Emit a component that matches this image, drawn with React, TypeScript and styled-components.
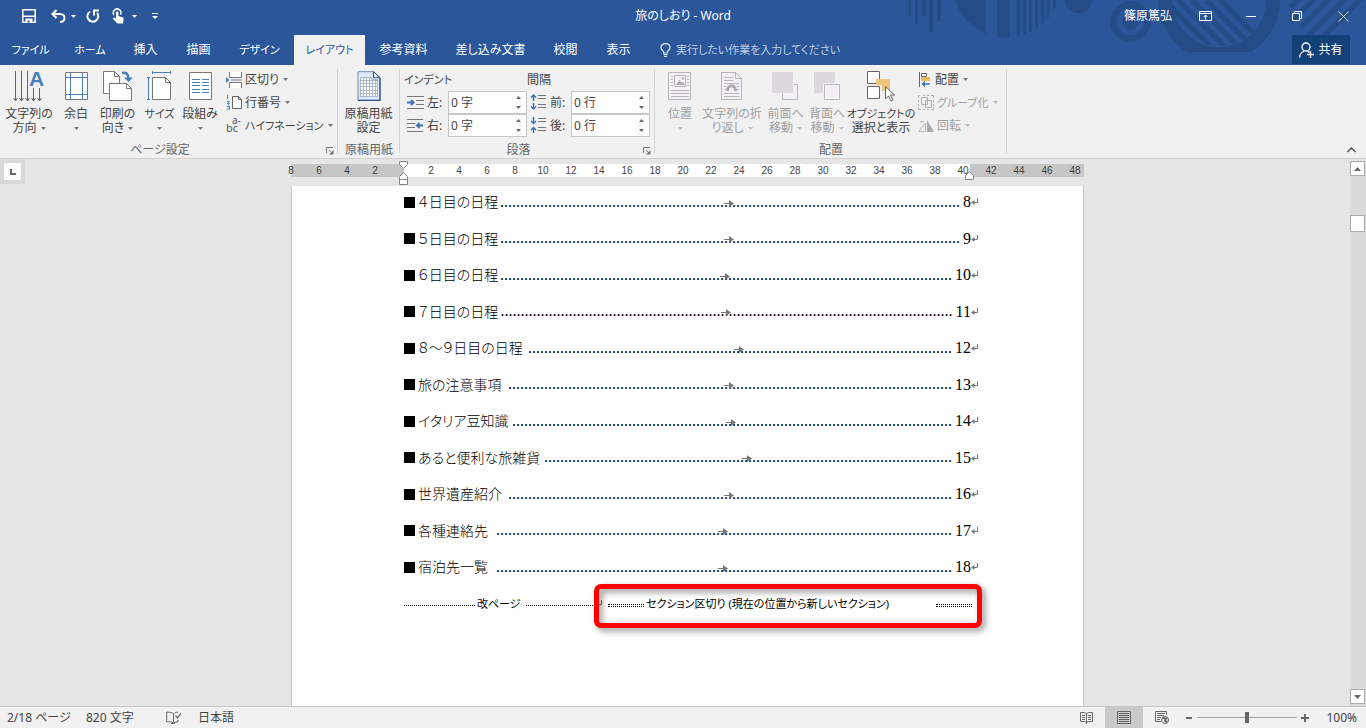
import React from "react";
import styled, { createGlobalStyle, css } from "styled-components";

const GlobalStyle = createGlobalStyle`
  *, *::before, *::after { box-sizing: border-box; }
  body {
    margin: 0;
    background: #e6e6e6;
    color: #444;
    font: 12px/14px "Noto Sans", "Noto Sans CJK JP", sans-serif;
    font-feature-settings: "palt";
  }
  button, input {
    font: inherit;
    font-feature-settings: inherit;
    color: inherit;
    border: 0;
    padding: 0;
    margin: 0;
    background: none;
    border-radius: 0;
  }
  svg { display: block; flex: none; }
`;

const Shell = styled.div`
  display: flex;
  flex-direction: column;
  min-height: 100vh;
`;

/* ---------- header ---------- */

const Header = styled.header`
  position: relative;
  height: 65px;
  background: #2b579a;
  color: #fff;
  overflow: hidden;
`;

const Pattern = styled.svg`
  position: absolute;
  top: 0;
  right: 0;
`;

const TitleBar = styled.div`
  position: relative;
  display: grid;
  grid-template-columns: 1fr auto 1fr;
  align-items: center;
  height: 32px;
`;

const QuickAccess = styled.div`
  display: flex;
  align-items: center;
  padding-left: 12px;
`;

const QuickButton = styled.button<{ $w: number }>`
  display: flex;
  align-items: center;
  justify-content: center;
  width: ${(p) => p.$w}px;
  height: 24px;
`;

const WindowControls = styled.div`
  display: flex;
  justify-content: flex-end;
  align-items: center;
`;

const WindowButton = styled.button`
  display: flex;
  align-items: center;
  justify-content: center;
  width: 46px;
  height: 32px;
`;

const UserButton = styled.button`
  width: 68px;
  height: 32px;
`;

const TabBar = styled.nav`
  position: relative;
  display: flex;
  margin-top: 3px;
  height: 30px;
`;

const Tab = styled.button<{ $w: number; $active?: boolean; $dense?: boolean }>`
  flex: none;
  width: ${(p) => p.$w}px;
  font-size: ${(p) => (p.$dense ? 11 : 12)}px;
  white-space: nowrap;
  ${(p) =>
    p.$active &&
    css`
      background: #f1f1f1;
      color: #2b579a;
    `}
`;

const TellMe = styled.label`
  display: flex;
  align-items: center;
  gap: 5px;
  margin-left: 15px;
  flex: 1;
`;

const TellMeInput = styled.input`
  width: 200px;
  font-size: 11px;
  outline: 0;
  &::placeholder { color: #bfcde2; opacity: 1; }
`;

const Share = styled.button`
  display: flex;
  align-items: center;
  justify-content: center;
  gap: 4px;
  width: 58px;
  height: 29px;
  margin-right: 16px;
  background: #124078;
`;

/* ---------- ribbon ---------- */

const Ribbon = styled.section`
  display: flex;
  height: 94px;
  background: #f1f1f1;
  border-bottom: 1px solid #d2d2d2;
`;

const Group = styled.div<{ $w: number }>`
  position: relative;
  flex: none;
  display: flex;
  flex-direction: column;
  width: ${(p) => p.$w}px;
  padding-top: 3px;
  background: linear-gradient(#d4d4d4, #d4d4d4) right 4px / 1px 84px no-repeat;
`;

const GroupBody = styled.div<{ $left?: number }>`
  display: flex;
  height: 73px;
  padding-left: ${(p) => p.$left ?? 0}px;
`;

const GroupLabel = styled.div`
  height: 17px;
  line-height: 18px;
  padding-right: 18px;
  text-align: center;
  color: #666;
`;

const NarrowLabel = styled(GroupLabel)`
  padding-right: 0;
`;

const Launcher = styled.button`
  position: absolute;
  right: 4px;
  bottom: 3px;
`;

const BigButton = styled.button<{ $w: number; $disabled?: boolean }>`
  display: flex;
  flex-direction: column;
  align-items: center;
  flex: none;
  width: ${(p) => p.$w}px;
  padding-top: 3px;
  white-space: nowrap;
  color: ${(p) => (p.$disabled ? "#a0a0a0" : "#444")};
`;

const BigIcon = styled.span`
  display: flex;
  justify-content: center;
  height: 32px;
  margin-bottom: 4px;
`;

const Line = styled.span<{ $dense?: boolean }>`
  display: flex;
  align-items: center;
  justify-content: center;
  gap: 4px;
  height: 14px;
  font-size: ${(p) => (p.$dense ? 11 : 12)}px;
`;

const SmallColumn = styled.div`
  display: flex;
  flex-direction: column;
  padding-left: 4px;
`;

const SmallButton = styled.button<{ $disabled?: boolean }>`
  display: flex;
  align-items: center;
  gap: 3px;
  height: 23px;
  white-space: nowrap;
  color: ${(p) => (p.$disabled ? "#a0a0a0" : "#444")};
`;

const SmallText = styled.span<{ $dense?: boolean }>`
  margin-right: 1px;
  font-size: ${(p) => (p.$dense ? 11 : 12)}px;
`;

const FieldColumn = styled.div<{ $w: number }>`
  flex: none;
  width: ${(p) => p.$w}px;
`;

const FieldHeading = styled.div<{ $dense?: boolean }>`
  height: 23px;
  line-height: 24px;
  font-size: ${(p) => (p.$dense ? 11 : 12)}px;
`;

const FieldRow = styled.div`
  display: flex;
  align-items: center;
  height: 23px;
  padding-left: 3px;
`;

const FieldLabel = styled.label`
  flex: none;
  width: 21px;
  margin-left: 3px;
`;

const Spin = styled.div`
  display: flex;
  width: 79px;
  height: 23px;
  background: #fff;
  border: 1px solid #c6c6c6;
`;

const SpinInput = styled.input`
  flex: 1;
  min-width: 0;
  padding-left: 2px;
  outline: 0;
`;

const SpinButtons = styled.div`
  display: flex;
  flex-direction: column;
  width: 15px;
`;

const SpinButton = styled.button`
  display: flex;
  flex: 1;
  align-items: center;
  justify-content: center;
`;

const Collapse = styled.button`
  margin: auto 10px 5px auto;
`;

/* ---------- document ---------- */

const Workspace = styled.main`
  flex: 1;
  display: flex;
`;

const Gutter = styled.div`
  flex: none;
  width: 25px;
`;

const TabSelector = styled.button`
  display: flex;
  align-items: center;
  justify-content: center;
  width: 25px;
  height: 25px;
  background: #fbfbfb;
  border: 4px solid #d8d8d8;
`;

const Canvas = styled.div`
  flex: 1;
  display: flex;
  flex-direction: column;
  align-items: center;
  padding-top: 5px;
`;

const Ruler = styled.div`
  position: relative;
  width: 793px;
  height: 13px;
  margin-bottom: 9px;
  background: linear-gradient(90deg, #c6c6c6 113px, #fff 113px 679px, #c6c6c6 679px);
`;

const RulerNumbers = styled.div`
  display: flex;
  margin-left: -14px;
  font: 10px/13px "Liberation Sans", sans-serif;
`;

const RulerNumber = styled.span`
  flex: none;
  width: 28px;
  text-align: center;
`;

const LeftMarker = styled.svg`
  position: absolute;
  left: 108px;
  top: -4px;
`;

const RightMarker = styled.svg`
  position: absolute;
  left: 674px;
  top: 6px;
`;

const Paper = styled.article`
  flex: 1;
  width: 793px;
  padding: 6px 105px 20px 112px;
  background: #fff;
  border: solid #c6c6c6;
  border-width: 0 1px;
`;

const Contents = styled.ol`
  display: flex;
  flex-direction: column;
  justify-content: space-between;
  height: 422px;
  margin: 0;
  padding: 0;
  list-style: none;
  color: #000;
`;

const Entry = styled.li`
  display: flex;
  align-items: center;
  height: 20px;
  line-height: 20px;
  white-space: nowrap;
`;

const Square = styled.span`
  width: 11px;
  height: 11px;
  margin-right: 3px;
  background: #000;
`;

const EntryTitle = styled.span`
  flex: none;
  padding-bottom: 2px;
  font-family: "Noto Sans CJK JP", sans-serif;
  font-weight: 300;
  font-size: 14px;
`;

const Leader = styled.span`
  position: relative;
  margin-left: auto;
`;

const Dots = styled.span`
  font: 16px/20px "Liberation Serif", serif;
`;

const TabMark = styled.svg`
  position: absolute;
  left: calc(50% - 6px);
  top: 8px;
`;

const PageNumber = styled.span`
  padding-left: 3px;
  font: 16px/20px "Liberation Serif", serif;
`;

const BreakRow = styled(Entry)`
  position: relative;
  font-size: 11px;
`;

const DottedLine = styled.span<{ $w: number; $double?: boolean }>`
  flex: none;
  width: ${(p) => p.$w}px;
  height: ${(p) => (p.$double ? 3 : 1)}px;
  margin-top: 3px;
  border-top: 1px dotted #000;
  border-bottom: ${(p) => (p.$double ? "1px dotted #000" : "0")};
`;

const BreakText = styled.span<{ $w: number }>`
  flex: none;
  width: ${(p) => p.$w}px;
  padding-left: 2px;
`;

const Highlight = styled.div`
  position: absolute;
  left: 190px;
  right: -4px;
  top: -10px;
  height: 44px;
  border: 5px solid #f00;
  border-radius: 7px;
  filter: drop-shadow(3px 3px 3px rgba(0, 0, 0, 0.45));
`;

const ScrollBar = styled.div`
  flex: none;
  display: flex;
  flex-direction: column;
  width: 16px;
  padding: 2px 1px 2px 0;
  background: linear-gradient(#dadada, #dadada) 0 2px no-repeat;
`;

const ScrollButton = styled.button`
  display: flex;
  align-items: center;
  justify-content: center;
  height: 15px;
  background: #fff;
  border: 1px solid #ababab;
`;

const ScrollTrack = styled.div`
  flex: 1;
  padding-top: 39px;
`;

const ScrollThumb = styled.div`
  height: 17px;
  background: #fff;
  border: 1px solid #ababab;
`;

/* ---------- status bar ---------- */

const StatusBar = styled.footer`
  display: flex;
  align-items: center;
  height: 22px;
  padding: 0 9px 0 7px;
  background: #f1f1f1;
  border-top: 1px solid #c6c6c6;
`;

const StatusText = styled.button<{ $w: number }>`
  width: ${(p) => p.$w}px;
  text-align: left;
  white-space: nowrap;
`;

const Spacer = styled.div`
  flex: 1;
`;

const ViewButton = styled.button<{ $active?: boolean }>`
  display: flex;
  align-items: center;
  justify-content: center;
  width: 38px;
  height: 21px;
  background: ${(p) => (p.$active ? "#cacaca" : "none")};
`;

const ZoomButton = styled.button`
  display: flex;
  align-items: center;
  justify-content: center;
  width: 16px;
  height: 21px;
`;

const ZoomSlider = styled.input`
  appearance: none;
  width: 100px;
  height: 11px;
  margin: 0;
  background: linear-gradient(#a6a6a6, #a6a6a6) 0 5px / 100% 1px no-repeat;
  &::-webkit-slider-thumb {
    appearance: none;
    width: 4px;
    height: 11px;
    background: #666;
  }
`;

const ZoomValue = styled.button`
  width: 44px;
  text-align: right;
`;

/* ---------- small drawings ---------- */

const Caret = ({ color = "#777" }: { color?: string }) => (
  <svg width="5" height="3" viewBox="0 0 5 3">
    <path d="M0 0h5L2.5 3z" fill={color} />
  </svg>
);

const CaretUp = () => (
  <svg width="5" height="3" viewBox="0 0 5 3">
    <path d="M0 3h5L2.5 0z" fill="#666" />
  </svg>
);

const ScrollArrow = ({ up }: { up?: boolean }) => (
  <svg width="7" height="4" viewBox="0 0 7 4">
    <path d={up ? "M0 4h7L3.500 0z" : "M0 0h7L3.500 4z"} fill="#666" />
  </svg>
);

const LauncherIcon = () => (
  <svg width="8" height="8" viewBox="0 0 8 8" fill="none" stroke="#777">
    <path d="M.5 6V.5H7M3 3l3 3" />
    <path d="M7.5 3v4.500H3z" fill="#777" stroke="none" />
  </svg>
);

const HeaderPattern = () => (
  <Pattern width="466" height="65" viewBox="900 0 466 65" fill="#244c86">
    <path d="M908 0h3v16h-3zM915 0h3v24h-3zM922 0h4v16h-4zM929 0h4v32h-4zM937 0h4v21h-4z" />
    <defs>
      <clipPath id="disc">
        <circle cx="1006.500" cy="-16.500" r="54" />
      </clipPath>
      <clipPath id="lens">
        <circle cx="1219" cy="-2" r="48" />
      </clipPath>
      <clipPath id="ringCut">
        <path d="M1140 0h160v52h-160z" />
      </clipPath>
    </defs>
    <g clipPath="url(#disc)">
      <path d="M950 0h36v40h-36zM997 0h13v40h-13zM1017 0h3v40h-3zM1023 0h3v40h-3zM1029 0h3v40h-3zM1035 0h3v40h-3zM1041 0h3v40h-3zM1047 0h3v40h-3zM1053 0h3v40h-3z" />
    </g>
    <circle cx="1078.500" cy="-1" r="14" />
    <circle cx="1130.500" cy="21.500" r="17" fill="none" stroke="#244c86" strokeWidth="6.500" />
    <circle cx="1130.500" cy="21.500" r="8" />
    <g clipPath="url(#ringCut)">
      <circle cx="1219" cy="0" r="54" fill="none" stroke="#244c86" strokeWidth="14" />
    </g>
    <g clipPath="url(#lens)" stroke="#244c86" strokeWidth="5">
      <path d="M1164 0l60 60M1178 0l60 60M1192 0l60 60M1206 0l60 60M1220 0l60 60" />
    </g>
    <g stroke="#244c86" strokeWidth="5">
      <path d="M1291 7l8-8M1291 22l24-24M1301 27l29-29M1303 41l44-44M1320 40l44-44" />
    </g>
  </Pattern>
);

const SaveIcon = () => (
  <svg width="14" height="14" viewBox="0 0 14 14" fill="none" stroke="#fff" strokeWidth="1.500">
    <path d="M.8.800h12.400v12.400H.800z" />
    <path d="M1 6.500h12v1.500H1zM3.500 9.500h7v4h-7z" fill="#fff" stroke="none" />
    <path d="M5.500 11.500h2v2h-2z" fill="#2b579a" stroke="none" />
  </svg>
);

const UndoIcon = () => (
  <svg width="15" height="14" viewBox="0 0 15 14" fill="none" stroke="#fff" strokeWidth="2">
    <path d="M5.500 1L1.500 5l4 4M2 5h7c6 0 6 8 0 8" />
  </svg>
);

const RedoIcon = () => (
  <svg width="14" height="14" viewBox="0 0 14 14" fill="none" stroke="#fff" strokeWidth="2">
    <path d="M4.200 2.500A5.400 5.400 0 1 0 11 3.800M8 6.500V1.500h5" />
  </svg>
);

const TouchIcon = () => (
  <svg width="13" height="16" viewBox="0 0 13 16" fill="none" stroke="#fff">
    <path d="M2 7A3.800 3.800 0 1 1 8.500 6.500" strokeWidth="1.500" />
    <path d="M4 4.500c0-1.500 2.400-1.500 2.400 0V8l4 1.200c1 .3 1.300 1 1.200 2L11 15.500H5.500L1 11c0-1.500 1.500-1.500 3-.500z" fill="#fff" stroke="none" />
  </svg>
);

const CustomizeIcon = () => (
  <svg width="6" height="7" viewBox="0 0 6 7" fill="#fff">
    <path d="M0 0h6v1H0zM0 3h6L3 6z" />
  </svg>
);

const RibbonDisplayIcon = () => (
  <svg width="13" height="10" viewBox="0 0 13 10" fill="none" stroke="#fff">
    <path d="M.5.500h12v9H.500zM.500 2.500h12M6.500 8.500V4.500M4.500 6l2-2 2 2" />
  </svg>
);

const MinimizeIcon = () => (
  <svg width="10" height="1" viewBox="0 0 10 1">
    <path d="M0 0h10v1H0z" fill="#fff" />
  </svg>
);

const RestoreIcon = () => (
  <svg width="10" height="10" viewBox="0 0 10 10" fill="none" stroke="#fff">
    <path d="M.5 2.500h7v7h-7zM2.500 2.500v-2h7v7h-2" />
  </svg>
);

const CloseIcon = () => (
  <svg width="11" height="11" viewBox="0 0 11 11" fill="none" stroke="#fff">
    <path d="M.5.500l10 10M10.500.500l-10 10" />
  </svg>
);

const BulbIcon = () => (
  <svg width="11" height="14" viewBox="0 0 11 14" fill="none" stroke="#dfe7f2" strokeWidth="1.200">
    <path d="M3.500 10V8.500C2.500 7.500 1 6.500 1 4.700 1 2.300 3 .700 5.500.700S10 2.300 10 4.700c0 1.800-1.500 2.800-2.500 3.800V10zM3.500 11.500h4M4 13.300h3" />
  </svg>
);

const ShareIcon = () => (
  <svg width="15" height="16" viewBox="0 0 15 16" fill="none" stroke="#fff" strokeWidth="1.300">
    <circle cx="7" cy="5" r="4" />
    <path d="M.700 15.500c0-3.500 2-5.500 4.600-6.500M8.500 9.300l2 1M11.500 9v7M8 12.500h7" />
  </svg>
);

const TextDirectionIcon = () => (
  <svg width="32" height="31" viewBox="0 0 32 31" fill="none" stroke="#666" overflow="visible">
    <path d="M2.500 0v30M8.500 0v30M14.500 0v30M20.500 17v13M26.500 17v13" />
    <path d="M.500 27l2 3 2-3M6.500 27l2 3 2-3M12.500 27l2 3 2-3M18.500 27l2 3 2-3M24.500 27l2 3 2-3" />
    <text x="16" y="15" fill="#4a7fb8" stroke="none" fontFamily="Liberation Sans" fontWeight="700" fontSize="21">A</text>
  </svg>
);

const MarginsIcon = () => (
  <svg width="23" height="30" viewBox="0 0 23 30" fill="none">
    <path d="M.5 1.500h22v27H.500z" fill="#fff" stroke="#777" />
    <path d="M5.500 2v26M17.500 2v26M1 6.500h21M1 23.500h21" stroke="#4a7fb8" />
  </svg>
);

const OrientationIcon = () => (
  <svg width="30" height="30" viewBox="0 0 30 30" fill="#fff" stroke="#777">
    <path d="M.5.500h11l5 5v17H.500z" />
    <path d="M11.500.500v5h5" fill="none" />
    <path d="M6.500 12.500h17l5 5v12h-22z" />
    <path d="M23.500 12.500v5h5" fill="none" />
    <path d="M19 2c4-1 6.500 1 6.500 6" fill="none" stroke="#4a7fb8" strokeWidth="2.500" />
    <path d="M21 6.500h9L25.500 11z" fill="#4a7fb8" stroke="none" />
  </svg>
);

const SizeIcon = () => (
  <svg width="25" height="30" viewBox="0 0 25 30" fill="none">
    <path d="M5.500 6.500h13l5 5v17h-18z" fill="#fff" stroke="#777" />
    <path d="M18.500 6.500v5h5" stroke="#777" />
    <path d="M5.500 1.500h18M5.500 0v3M23.500 0v3M1.500 6v22M0 6.500h3M0 28.500h3" stroke="#4a7fb8" />
  </svg>
);

const ColumnsIcon = () => (
  <svg width="23" height="30" viewBox="0 0 23 30" fill="none">
    <path d="M.5 1.500h22v27H.500z" fill="#fff" stroke="#777" />
    <path d="M3 8.500h8M3 11.500h8M3 14.500h8M3 18.500h8M3 21.500h8M13 8.500h7M13 11.500h7M13 14.500h7M13 18.500h7M13 21.500h7" stroke="#4a7fb8" />
  </svg>
);

const BreaksIcon = () => (
  <svg width="16" height="16" viewBox="0 0 16 16" fill="none" stroke="#777">
    <path d="M3.500 0v5.500h12V0M3.500 16v-5.500h12V16" fill="#fff" />
    <path d="M5 8h11" />
    <path d="M0 5l3.500 3L0 11z" fill="#4a7fb8" stroke="none" />
  </svg>
);

const LineNumbersIcon = () => (
  <svg width="16" height="15" viewBox="0 0 16 15" fill="none" stroke="#666">
    <path d="M6.500 1.500h6l3 3v9h-9z" fill="#fff" />
    <path d="M12.500 1.500v3h3" />
    <path d="M1.500 0v4M1 6.500h2.500M1 8.500h2.500M2.500 6v4M1 11.500h2.500M1 14h2.500M3.500 11v3.500" stroke="#4a7fb8" />
  </svg>
);

const HyphenationIcon = () => (
  <svg width="16" height="16" viewBox="0 0 16 16" fill="#555" fontFamily="Noto Sans" fontSize="11" overflow="visible">
    <text x="0" y="14">bc</text>
    <text x="6" y="6" fontSize="10">a-</text>
  </svg>
);

const ManuscriptIcon = () => (
  <svg width="24" height="30" viewBox="0 0 24 30" fill="none">
    <path d="M1 .700h15.500l6.500 6v22.600H1z" fill="#dfeafa" stroke="#6d87b3" />
    <path d="M23 7v22.300H1" stroke="#34568f" strokeWidth="1.300" />
    <path d="M16.500.700v6H23z" fill="#fff" stroke="#34568f" />
    <path d="M3.500 6.500h11v2h6v17h-17zM3.500 9.500h17M3.500 12.500h17M3.500 15.500h17M3.500 19.500h17M3.500 22.500h17M6.500 6.500v19M9.500 6.500v19M12.500 6.500v19M15.500 8.500v17M18.500 8.500v17" fill="#fff" stroke="#a9b6cb" />
  </svg>
);

const IndentIcon = ({ right }: { right?: boolean }) => (
  <svg width="17" height="13" viewBox="0 0 17 13" fill="none" stroke="#777">
    {right ? (
      <path d="M0 .500h16M0 4.500h8M0 8.500h8M0 12.500h16" />
    ) : (
      <path d="M0 .500h17M9 4.500h8M9 8.500h8M0 12.500h17" />
    )}
    {right ? (
      <path d="M16 6.500h-5M12.500 4l-2.500 2.500L12.500 9" stroke="#3f74b5" strokeWidth="2" />
    ) : (
      <path d="M0 6.500h6M4 4l2.500 2.500L4 9" stroke="#3f74b5" strokeWidth="2" />
    )}
  </svg>
);

const SpacingIcon = ({ after }: { after?: boolean }) => (
  <svg width="17" height="17" viewBox="0 0 17 17" fill="none" stroke="#777">
    <path d="M8 1.500h8M8 4.500h8M8 10.500h8M8 13.500h8" />
    <path
      d={after ? "M3.500 0v6M1 4l2.500 2.500L6 4M3.500 16v-6M1 13l2.500-2.500L6 13" : "M3.500 7V1M1 3.500L3.500 1 6 3.500M3.500 9v6M1 12.500L3.500 15 6 12.500"}
      stroke="#3f74b5"
      strokeWidth="1.500"
    />
  </svg>
);

const PositionIcon = () => (
  <svg width="24" height="30" viewBox="0 0 24 30" fill="#f5f0f7" stroke="#b5b5b5">
    <path d="M.5 1.500h22v27H.500z" />
    <path d="M6.500 4.500h11v11h-11z" />
    <path d="M3 5.500h2M3 8.500h2M3 11.500h2M3 14.500h2M19 5.500h2M19 8.500h2M19 11.500h2M19 14.500h2M3 19.500h18M3 22.500h18M3 25.500h18" />
    <path d="M8 14l3.500-5 2.500 3 1-1 2 3zM14 6.500h2v2h-2z" fill="#a9a9a9" stroke="none" />
  </svg>
);

const WrapIcon = () => (
  <svg width="22" height="30" viewBox="0 0 22 30" fill="none" stroke="#b5b5b5">
    <path d="M.5 1.500h14l6 6v21H.500z" fill="#f5f0f7" />
    <path d="M14.500 1.500v6h6" />
    <path d="M3 6.500h9M3 9.500h9M3 12.500h15M3 15.500h2M16 15.500h2M3 18.500h2M16 18.500h2M3 22.500h15M3 25.500h15" />
    <path d="M6.500 20c0-7 8-7 8 0" stroke="#a9a9a9" strokeWidth="3" />
  </svg>
);

const ForwardIcon = () => (
  <svg width="27" height="30" viewBox="0 0 27 30">
    <path d="M10.500 13.500h15v15h-15z" fill="#f5f0f7" stroke="#b9b9b9" />
    <path d="M0 1h22v22H0z" fill="#f1f1f1" />
    <path d="M0 1h21v21H0z" fill="#ddd8dd" />
  </svg>
);

const BackwardIcon = () => (
  <svg width="27" height="30" viewBox="0 0 27 30">
    <path d="M0 1h21v21H0z" fill="#ddd8dd" />
    <path d="M9 12h18v18H9z" fill="#f1f1f1" />
    <path d="M10.500 13.500h15v15h-15z" fill="#f5f0f7" stroke="#b9b9b9" />
  </svg>
);

const SelectionIcon = () => (
  <svg width="28" height="31" viewBox="0 0 28 31" fill="#fff" stroke="#666">
    <path d="M.5.500h12v12H.500z" />
    <path d="M9 8h14v12H15v-6H9z" fill="#efc57c" stroke="none" />
    <path d="M.5 15.500h12v12H.500z" />
    <path d="M18.500 15.500v12.500l3-3 2.500 5 2-1-2.500-5h4z" />
  </svg>
);

const AlignIcon = () => (
  <svg width="14" height="15" viewBox="0 0 14 15" fill="none" stroke="#666">
    <path d="M1.500 0v15M3.500 1.500h5v3h-5z" />
    <path d="M3 5h9v4H3z" fill="#efb95f" stroke="none" />
    <path d="M12 12H4.500M7 9.500L4.500 12 7 14.500" stroke="#3f74b5" strokeWidth="1.500" />
  </svg>
);

const GroupIcon = () => (
  <svg width="16" height="15" viewBox="0 0 16 15" fill="none" stroke="#b0b0b0">
    <path d="M3.500 2.500h6v7h-6zM7.500 5.500h6v7h-6z" />
    <path d="M0 0h3M.500 0v3M13 .500h3M15.500 0v3M0 14.500h3M.500 12v3M13 14.500h3M15.500 12v3M5 .500h2M9 .500h2M5 14.500h2M9 14.500h2M.500 5v2M.500 9v2M15.500 5v2M15.500 9v2" />
  </svg>
);

const RotateIcon = () => (
  <svg width="16" height="12" viewBox="0 0 16 12">
    <path d="M7.500 3v8.500H.800z" fill="none" stroke="#b5b5b5" />
    <path d="M9 0v12h7z" fill="#a9a9a9" />
    <path d="M2 3c1-2 3-2 4-1" fill="none" stroke="#b5b5b5" />
  </svg>
);

const ReturnMark = () => (
  <svg width="7" height="8" viewBox="0 0 7 8" fill="none" stroke="#777">
    <path d="M6.500 0v4.500H1" />
    <path d="M0 4.500L3.500 2v5z" fill="#777" stroke="none" />
  </svg>
);

const ProofIcon = () => (
  <svg width="15" height="14" viewBox="0 0 15 14" fill="none" stroke="#666">
    <path d="M7.500 3v8.500M7.500 3C6 1.300 3 1 .700 1.200v9.600c2.500-.300 5 0 6.800 1.200 1.300-.800 3-1.200 4.500-1.200V9M7.500 3C8.500 1.800 10 1.200 12 1.200M5 12.500h4" />
    <path d="M9.500 4.500L11.500 7 15 2" strokeWidth="1.300" />
  </svg>
);

const ReadIcon = () => (
  <svg width="13" height="13" viewBox="0 0 13 13" fill="none" stroke="#666">
    <path d="M.5 1.500h4l2 1 2-1h4v9h-4l-2 1-2-1h-4zM6.500 2v11M2 4.500h3M2 6.500h3M2 8.500h3M8 4.500h3M8 6.500h3M8 8.500h3" />
  </svg>
);

const PrintLayoutIcon = () => (
  <svg width="14" height="13" viewBox="0 0 14 13" fill="none" stroke="#666">
    <path d="M.5.500h13v12H.500zM2 2.500h10M2 4.500h10M2 6.500h10M2 8.500h10M2 10.500h10" />
  </svg>
);

const WebLayoutIcon = () => (
  <svg width="14" height="13" viewBox="0 0 14 13" fill="none" stroke="#666">
    <path d="M11.500 4V.500H.500v10H6M2 2.500h8M2 4.500h7M2 6.500h4M2 8.500h3" />
    <circle cx="10" cy="9" r="3.500" fill="#f1f1f1" />
    <path d="M7.500 7l3.500.5-1 2 2 2" strokeWidth="2" />
  </svg>
);

/* ---------- composed parts ---------- */

type BigProps = {
  w: number;
  icon: React.ReactNode;
  first: string;
  second?: string;
  caret?: boolean;
  disabled?: boolean;
  dense?: boolean;
};

const Big = ({ w, icon, first, second, caret = true, disabled, dense }: BigProps) => (
  <BigButton type="button" $w={w} $disabled={disabled}>
    <BigIcon>{icon}</BigIcon>
    <Line $dense={dense}>{first}</Line>
    <Line>
      {second}
      {caret && <Caret color={disabled ? "#bbb" : "#777"} />}
    </Line>
  </BigButton>
);

type SmallProps = { icon: React.ReactNode; text: string; disabled?: boolean; dense?: boolean };

const Small = ({ icon, text, disabled, dense }: SmallProps) => (
  <SmallButton type="button" $disabled={disabled}>
    {icon}
    <SmallText $dense={dense}>{text}</SmallText>
    <Caret color={disabled ? "#bbb" : "#777"} />
  </SmallButton>
);

type FieldProps = { id: string; icon: React.ReactNode; label: string; value: string };

const Field = ({ id, icon, label, value }: FieldProps) => (
  <FieldRow>
    {icon}
    <FieldLabel htmlFor={id}>{label}</FieldLabel>
    <Spin>
      <SpinInput id={id} type="text" defaultValue={value} />
      <SpinButtons>
        <SpinButton type="button" aria-label="増やす"><CaretUp /></SpinButton>
        <SpinButton type="button" aria-label="減らす"><Caret color="#666" /></SpinButton>
      </SpinButtons>
    </Spin>
  </FieldRow>
);

const tabs = [
  { name: "ファイル", w: 61, dense: true },
  { name: "ホーム", w: 58, dense: true },
  { name: "挿入", w: 53 },
  { name: "描画", w: 53 },
  { name: "デザイン", w: 69, dense: true },
  { name: "レイアウト", w: 71, dense: true, active: true },
  { name: "参考資料", w: 77 },
  { name: "差し込み文書", w: 97 },
  { name: "校閲", w: 53 },
  { name: "表示", w: 53 },
];

const rulerNumbers = [8, 6, 4, 2, null, ...Array.from({ length: 24 }, (_, i) => (i + 1) * 2)];

const entries = [
  { title: "４日目の日程", page: 8, dots: 115 },
  { title: "５日目の日程", page: 9, dots: 115 },
  { title: "６日目の日程", page: 10, dots: 113 },
  { title: "７日目の日程", page: 11, dots: 113 },
  { title: "８～９日目の日程", page: 12, dots: 106 },
  { title: "旅の注意事項", page: 13, dots: 111 },
  { title: "イタリア豆知識", page: 14, dots: 110 },
  { title: "あると便利な旅雑貨", page: 15, dots: 102 },
  { title: "世界遺産紹介", page: 16, dots: 111 },
  { title: "各種連絡先", page: 17, dots: 114 },
  { title: "宿泊先一覧", page: 18, dots: 114 },
];

export default function App() {
  return (
    <Shell>
      <GlobalStyle />
      <Header>
        <HeaderPattern />
        <TitleBar>
          <QuickAccess>
            <QuickButton type="button" $w={34} aria-label="上書き保存"><SaveIcon /></QuickButton>
            <QuickButton type="button" $w={24} aria-label="元に戻す"><UndoIcon /></QuickButton>
            <QuickButton type="button" $w={7} aria-label="元に戻す一覧"><Caret color="#fff" /></QuickButton>
            <QuickButton type="button" $w={32} aria-label="繰り返し"><RedoIcon /></QuickButton>
            <QuickButton type="button" $w={18} aria-label="タッチ/マウス モード"><TouchIcon /></QuickButton>
            <QuickButton type="button" $w={14} aria-label="モード一覧"><Caret color="#fff" /></QuickButton>
            <QuickButton type="button" $w={28} aria-label="カスタマイズ"><CustomizeIcon /></QuickButton>
          </QuickAccess>
          <span>旅のしおり - Word</span>
          <WindowControls>
            <UserButton type="button">篠原篤弘</UserButton>
            <WindowButton type="button" aria-label="リボンの表示オプション"><RibbonDisplayIcon /></WindowButton>
            <WindowButton type="button" aria-label="最小化"><MinimizeIcon /></WindowButton>
            <WindowButton type="button" aria-label="元のサイズに戻す"><RestoreIcon /></WindowButton>
            <WindowButton type="button" aria-label="閉じる"><CloseIcon /></WindowButton>
          </WindowControls>
        </TitleBar>
        <TabBar>
          {tabs.map((t) => (
            <Tab key={t.name} type="button" $w={t.w} $active={t.active} $dense={t.dense}>{t.name}</Tab>
          ))}
          <TellMe>
            <BulbIcon />
            <TellMeInput type="text" placeholder="実行したい作業を入力してください" aria-label="操作アシスト" />
          </TellMe>
          <Share type="button"><ShareIcon />共有</Share>
        </TabBar>
      </Header>

      <Ribbon>
        <Group $w={338}>
          <GroupBody>
            <Big w={58} icon={<TextDirectionIcon />} first="文字列の" second="方向" />
            <Big w={36} icon={<MarginsIcon />} first="余白" />
            <Big w={47} icon={<OrientationIcon />} first="印刷の" second="向き" />
            <Big w={37} icon={<SizeIcon />} first="サイズ" dense />
            <Big w={44} icon={<ColumnsIcon />} first="段組み" />
            <SmallColumn>
              <Small icon={<BreaksIcon />} text="区切り" />
              <Small icon={<LineNumbersIcon />} text="行番号" />
              <Small icon={<HyphenationIcon />} text="ハイフネーション" dense />
            </SmallColumn>
          </GroupBody>
          <GroupLabel>ページ設定</GroupLabel>
          <Launcher type="button" aria-label="ページ設定"><LauncherIcon /></Launcher>
        </Group>

        <Group $w={62}>
          <GroupBody>
            <Big w={61} icon={<ManuscriptIcon />} first="原稿用紙" second="設定" caret={false} />
          </GroupBody>
          <NarrowLabel>原稿用紙</NarrowLabel>
        </Group>

        <Group $w={255}>
          <GroupBody $left={4}>
            <FieldColumn $w={123}>
              <FieldHeading $dense>インデント</FieldHeading>
              <Field id="indent-left" icon={<IndentIcon />} label="左:" value="0 字" />
              <Field id="indent-right" icon={<IndentIcon right />} label="右:" value="0 字" />
            </FieldColumn>
            <FieldColumn $w={123}>
              <FieldHeading>間隔</FieldHeading>
              <Field id="space-before" icon={<SpacingIcon />} label="前:" value="0 行" />
              <Field id="space-after" icon={<SpacingIcon after />} label="後:" value="0 行" />
            </FieldColumn>
          </GroupBody>
          <GroupLabel>段落</GroupLabel>
          <Launcher type="button" aria-label="段落の設定"><LauncherIcon /></Launcher>
        </Group>

        <Group $w={352}>
          <GroupBody $left={6}>
            <Big w={38} icon={<PositionIcon />} first="位置" disabled />
            <Big w={66} icon={<WrapIcon />} first="文字列の折" second="り返し" disabled />
            <Big w={41} icon={<ForwardIcon />} first="前面へ" second="移動" disabled />
            <Big w={42} icon={<BackwardIcon />} first="背面へ" second="移動" disabled />
            <Big w={66} icon={<SelectionIcon />} first="オブジェクトの" second="選択と表示" caret={false} dense />
            <SmallColumn>
              <Small icon={<AlignIcon />} text="配置" />
              <Small icon={<GroupIcon />} text="グループ化" disabled dense />
              <Small icon={<RotateIcon />} text="回転" disabled />
            </SmallColumn>
          </GroupBody>
          <NarrowLabel>配置</NarrowLabel>
        </Group>

        <Collapse type="button" aria-label="リボンを折りたたむ">
          <svg width="9" height="6" viewBox="0 0 9 6" fill="none" stroke="#555" strokeWidth="1.500">
            <path d="M.5 5L4.500 1l4 4" />
          </svg>
        </Collapse>
      </Ribbon>

      <Workspace>
        <Gutter>
          <TabSelector type="button" aria-label="左揃えタブ">
            <svg width="6" height="6" viewBox="0 0 6 6">
              <path d="M0 0h2v4h4v2H0z" fill="#666" />
            </svg>
          </TabSelector>
        </Gutter>
        <Canvas>
          <Ruler>
            <RulerNumbers>
              {rulerNumbers.map((n, i) => (
                <RulerNumber key={i}>{n}</RulerNumber>
              ))}
            </RulerNumbers>
            <LeftMarker width="9" height="26" viewBox="0 0 9 26" fill="#fff" stroke="#888">
              <path d="M.5 1.500h8v3l-4 4-4-4zM4.500 12.500l4 4v3h-8v-3zM.500 19.500h8v5h-8z" />
            </LeftMarker>
            <RightMarker width="9" height="10" viewBox="0 0 9 10" fill="#fff" stroke="#888">
              <path d="M4.500 1.500l4 4v4h-8v-4z" />
            </RightMarker>
          </Ruler>
          <Paper>
            <Contents>
              {entries.map((e) => (
                <Entry key={e.title}>
                  <Square />
                  <EntryTitle>{e.title}</EntryTitle>
                  <Leader>
                    <Dots aria-hidden="true">{".".repeat(e.dots)}</Dots>
                    <TabMark width="10" height="7" viewBox="0 0 10 7">
                      <path d="M0 3h5V0l5 3.500L5 7V4H0z" fill="#777" />
                    </TabMark>
                  </Leader>
                  <PageNumber>{e.page}</PageNumber>
                  <ReturnMark />
                </Entry>
              ))}
              <BreakRow>
                <DottedLine $w={71} />
                <BreakText $w={51}>改ページ</BreakText>
                <DottedLine $w={67} />
                <BreakText $w={15}><ReturnMark /></BreakText>
                <DottedLine $w={36} $double />
                <BreakText $w={292}>セクション区切り (現在の位置から新しいセクション)</BreakText>
                <DottedLine $w={36} $double />
                <Highlight />
              </BreakRow>
            </Contents>
          </Paper>
        </Canvas>
        <ScrollBar>
          <ScrollButton type="button" aria-label="上へ"><ScrollArrow up /></ScrollButton>
          <ScrollTrack><ScrollThumb /></ScrollTrack>
          <ScrollButton type="button" aria-label="下へ"><ScrollArrow /></ScrollButton>
        </ScrollBar>
      </Workspace>

      <StatusBar>
        <StatusText type="button" $w={79}>2/18 ページ</StatusText>
        <StatusText type="button" $w={80}>820 文字</StatusText>
        <StatusText type="button" $w={32} aria-label="文章校正"><ProofIcon /></StatusText>
        <StatusText type="button" $w={40}>日本語</StatusText>
        <Spacer />
        <ViewButton type="button" aria-label="閲覧モード"><ReadIcon /></ViewButton>
        <ViewButton type="button" $active aria-label="印刷レイアウト"><PrintLayoutIcon /></ViewButton>
        <ViewButton type="button" aria-label="Web レイアウト"><WebLayoutIcon /></ViewButton>
        <ZoomButton type="button" aria-label="縮小">
          <svg width="6" height="2" viewBox="0 0 6 2"><path d="M0 0h6v2H0z" fill="#666" /></svg>
        </ZoomButton>
        <ZoomSlider type="range" min={0} max={100} defaultValue={50} aria-label="ズーム" />
        <ZoomButton type="button" aria-label="拡大">
          <svg width="8" height="8" viewBox="0 0 8 8"><path d="M3 0h2v3h3v2H5v3H3V5H0V3h3z" fill="#666" /></svg>
        </ZoomButton>
        <ZoomValue type="button">100%</ZoomValue>
      </StatusBar>
    </Shell>
  );
}
